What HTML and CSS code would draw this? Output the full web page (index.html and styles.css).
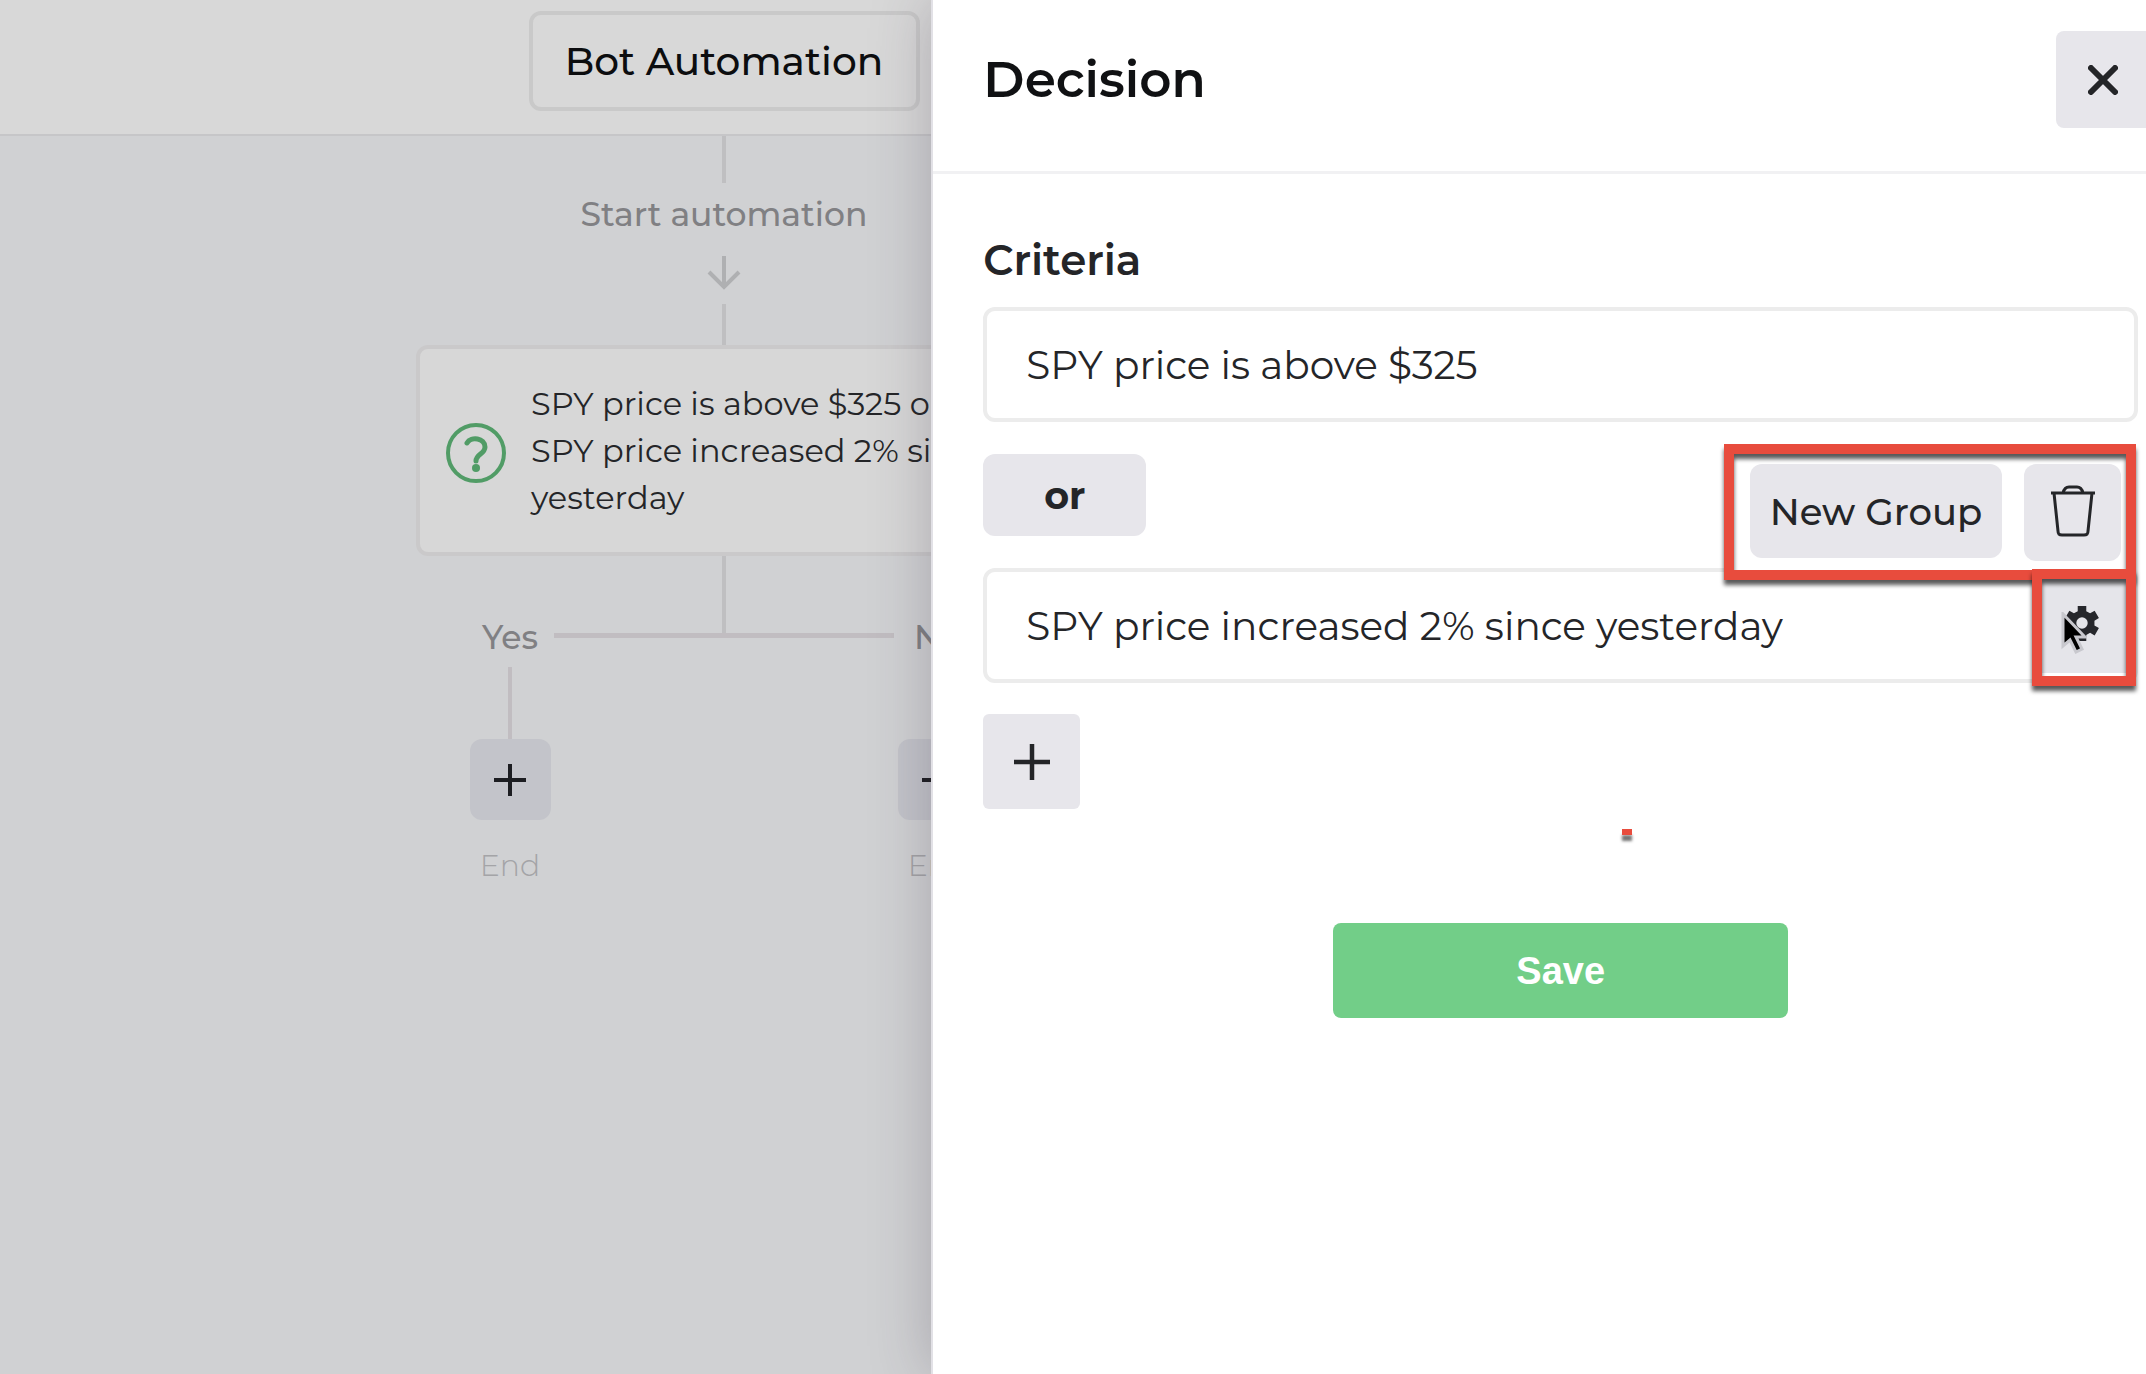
FILE: index.html
```html
<!DOCTYPE html>
<html lang="en">
<head>
<meta charset="utf-8">
<meta name="viewport" content="width=device-width, initial-scale=1">
<title>Bot Automation</title>
<link rel="stylesheet" href="styles.css">
</head>
<body>
<div class="app">
  <main class="workspace">
    <header class="topbar">
      <div class="track"><button class="bot-name" type="button">Bot Automation</button></div>
    </header>
    <section class="flow track">
      <div class="line line-start"></div>
      <p class="flow-label">Start automation</p>
      <svg class="arrow" viewBox="0 0 34 34" aria-hidden="true"><path d="M17 0v31M2 16l15 15 15-15"/></svg>
      <div class="line line-card"></div>
      <article class="decision-card">
        <svg class="question" viewBox="0 0 60 60" aria-hidden="true">
          <circle cx="30" cy="30" r="28"/>
          <path d="M21 20c4-7 18-5 18 4 0 7-9 7-9 14"/>
          <circle class="question-dot" cx="30" cy="45" r="4"/>
        </svg>
        <p>SPY price is above $325 or<br>SPY price increased 2% since<br>yesterday</p>
      </article>
      <div class="line line-split"></div>
      <div class="branches">
        <div class="branch">
          <p class="flow-label">Yes</p>
          <div class="line line-branch"></div>
          <button class="node-add" type="button" aria-label="Add to Yes branch"><svg class="plus" viewBox="0 0 32 32" aria-hidden="true"><path d="M16 0v32M0 16h32"/></svg></button>
          <p class="end-label">End</p>
        </div>
        <div class="crossbar"></div>
        <div class="branch">
          <p class="flow-label">No</p>
          <div class="line line-branch"></div>
          <button class="node-add" type="button" aria-label="Add to No branch"><svg class="plus" viewBox="0 0 32 32" aria-hidden="true"><path d="M16 0v32M0 16h32"/></svg></button>
          <p class="end-label">End</p>
        </div>
      </div>
    </section>
  </main>

  <aside class="drawer">
    <header class="drawer-head">
      <h1>Decision</h1>
      <button class="close" type="button" aria-label="Close"><svg viewBox="0 0 30 30" aria-hidden="true"><path d="M3 3l24 24M27 3L3 27"/></svg></button>
    </header>
    <form class="criteria">
      <h2>Criteria</h2>
      <div class="criterion">
        <input type="text" aria-label="First criterion" value="SPY price is above $325">
      </div>
      <button class="operator" type="button">or</button>
      <div class="criterion">
        <input type="text" aria-label="Second criterion" value="SPY price increased 2% since yesterday">
        <div class="marked menu">
          <button class="new-group" type="button">New Group</button>
          <button class="trash" type="button" aria-label="Delete"><svg viewBox="0 0 44 52" aria-hidden="true"><path d="M0 8h44M3 8l4 38c0 3 1 4 4 4h22c3 0 4-1 4-4l4-38M12 8c1-4 3-6 6-6h8c3 0 5 2 6 6"/></svg></button>
        </div>
        <div class="marked settings">
          <button class="gear" type="button" aria-label="Settings">
            <svg viewBox="0 0 40 40" aria-hidden="true"><path fill-rule="evenodd" d="M15.500 1h9v5.500l4 2.300 4.800-2.800 4.500 7.800-4.700 2.700v5l4.700 2.700-4.500 7.800-4.800-2.800-4 2.300V38h-9v-6.500l-4-2.300-4.800 2.800-4.500-7.800 4.700-2.700v-5L2.200 13.800 6.700 6l4.800 2.800 4-2.300zM20 13a6 6 0 1 0 0 12 6 6 0 0 0 0-12z"/></svg>
          </button>
          <svg class="cursor" viewBox="0 0 26 42" aria-hidden="true"><path d="M2 2v32l7-6 6 12 6-3-6-12h9z"/></svg>
        </div>
      </div>
      <button class="add" type="button" aria-label="Add criterion"><svg class="plus" viewBox="0 0 32 32" aria-hidden="true"><path d="M16 0v32M0 16h32"/></svg></button>
      <div class="actions">
        <span class="speck"></span>
        <button class="save" type="submit">Save</button>
      </div>
    </form>
  </aside>
</div>
</body>
</html>
```
FILE: styles.css
```css
* { box-sizing: border-box; }
body, h1, h2, p { margin: 0; }
body {
  font-family: Montserrat, Inter, "Liberation Sans", sans-serif;
  color: #242528;
}
button { border: 0; padding: 0; font: inherit; color: inherit; display: flex; align-items: center; justify-content: center; }
svg { display: block; fill: none; stroke: currentColor; stroke-width: 4; flex: none; }

.app {
  display: grid;
  grid-template-columns: 434fr 566fr;
  min-height: 100vh;
  overflow: hidden;
}

/* Flow canvas, dimmed while the drawer is open */
.workspace { min-width: 0; background: #d0d1d3; }
.topbar { height: 136px; padding-top: 11px; background: #d8d8d8; border-bottom: 2px solid #c6c6c8; }
.track { width: 616px; margin-left: 416px; display: flex; flex-direction: column; align-items: center; }
.bot-name {
  width: 391px; height: 100px;
  border: 4px solid #c9c9c9; border-radius: 12px;
  background: transparent; color: #0c0d0f; font-size: 39px; font-weight: 500;
}
.line { width: 4px; background: #bfbfc1; }
.line-start { height: 47px; }
.line-card { height: 41px; }
.line-split { height: 77px; }
.line-branch { height: 72px; background: #c1bdc1; }
.flow-label { font-size: 33px; line-height: 40px; font-weight: 500; color: #808083; }
.flow > .flow-label { margin: 11px 0 22px; }
.arrow { width: 34px; height: 34px; margin-bottom: 14px; color: #afb0b2; }
.decision-card {
  width: 100%; height: 211px; padding: 0 26px;
  display: flex; align-items: center; gap: 25px;
  border: 4px solid #cac9ca; border-radius: 12px;
  background: #d7d7d7;
  font-size: 32px; line-height: 47px; white-space: nowrap;
}
.question { width: 60px; height: 60px; margin-top: 4px; color: #519c66; }
.question path { stroke-width: 5; stroke-linecap: round; }
.question .question-dot { fill: currentColor; stroke: none; }
.branches { display: flex; justify-content: center; }
.branch { width: 88px; display: flex; flex-direction: column; align-items: center; }
.branch .flow-label { margin: -16px 0 10px; }
.crossbar { width: 340px; height: 5px; background: #c1bdc1; }
.node-add { width: 81px; height: 81px; border-radius: 12px; background: #c3c4ca; color: #1c1d21; }
.plus { width: 32px; height: 32px; }
.end-label { margin-top: 28px; font-size: 30px; line-height: 36px; font-weight: 300; color: #a4a4a7; }

/* Decision drawer */
.drawer {
  position: relative; min-width: 0;
  background: #fff; border-left: 2px solid #e2e1e6;
  box-shadow: 0 0 56px rgba(60, 50, 70, .28);
}
.drawer-head {
  height: 174px; padding: 0 0 12px 50px;
  display: flex; align-items: center; justify-content: space-between;
  border-bottom: 3px solid #f1f1f3;
}
h1 { font-size: 50px; line-height: 60px; font-weight: 600; color: #101113; }
.close { width: 97px; height: 97px; padding-right: 4px; margin-right: -7px; border-radius: 8px; background: #e7e6eb; }
.close svg { width: 30px; height: 30px; stroke-width: 6; stroke-linecap: round; }
.criteria { padding: 60px 8px 0 50px; display: flex; flex-direction: column; align-items: flex-start; }
h2 { margin-bottom: 21px; font-size: 42px; line-height: 52px; font-weight: 600; }
.criterion { position: relative; width: 100%; }
.criterion input {
  display: block; width: 100%; height: 115px; padding: 0 39px;
  border: 4px solid #ececec; border-radius: 12px; background: #fff;
  font: inherit; font-size: 39px; color: #242528;
}
.operator { width: 163px; height: 82px; margin: 32px 0; border-radius: 12px; background: #e7e6eb; font-size: 38px; font-weight: 700; }
.add { width: 97px; height: 95px; margin-top: 31px; border-radius: 6px; background: #e7e6eb; }
.add .plus { width: 36px; height: 36px; }

/* Highlighted controls over the second criterion */
.marked { position: absolute; right: 2px; background: #fff; }
.marked::after {
  content: ""; position: absolute; inset: 0; pointer-events: none;
  border: 10px solid #e84c3d;
  filter: drop-shadow(0 5px 2px rgba(0, 0, 0, .65));
}
.menu { bottom: 103px; width: 412px; height: 136px; padding: 20px 15px 0 26px; display: flex; justify-content: space-between; align-items: flex-start; }
.new-group, .trash { border-radius: 12px; background: #e7e6eb; }
.new-group { width: 252px; height: 94px; font-size: 37px; font-weight: 500; }
.trash { width: 97px; height: 97px; }
.trash svg { width: 44px; height: 52px; stroke-width: 3; margin-bottom: 4px; }
.settings { top: 1px; width: 104px; height: 117px; padding: 6px 10px 13px; }
.gear { width: 100%; height: 100%; background: #e5e5ea; color: #26272c; }
.gear svg { width: 38px; height: 38px; margin-right: 4px; }
.gear path { fill: currentColor; stroke: none; }
.cursor { position: absolute; left: 29px; top: 43px; width: 26px; height: 42px; fill: #000; stroke: #c8c8ce; stroke-width: 3; }

.actions { width: 100%; display: flex; flex-direction: column; align-items: center; }
.speck { width: 10px; height: 6px; margin: 20px 0 88px 133px; background: #e84c3d; box-shadow: 0 6px 3px rgba(0, 0, 0, .55); }
.save { width: 455px; height: 95px; padding-top: 2px; border-radius: 8px; background: #72ce88; color: #fff; font: 700 38px "Liberation Sans", sans-serif; }
```
